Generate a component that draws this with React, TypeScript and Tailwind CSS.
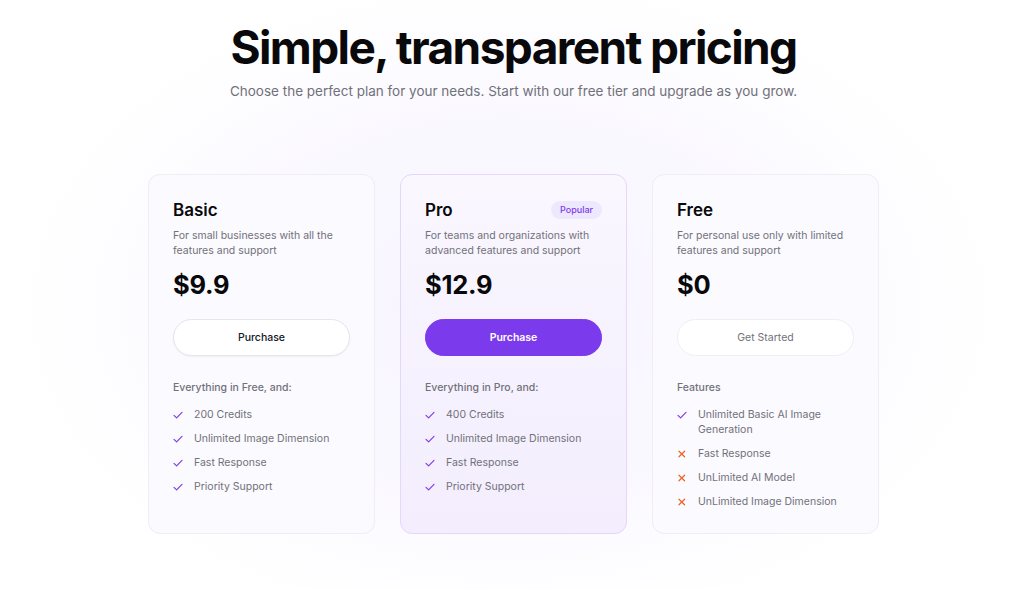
type Feature = {
  text: string;
  included: boolean;
};

type Plan = {
  name: string;
  description: string;
  price: string;
  cta: string;
  featuresTitle: string;
  features: Feature[];
  popular?: boolean;
  variant: "outline" | "primary" | "muted";
};

const plans: Plan[] = [
  {
    name: "Basic",
    description: "For small businesses with all the features and support",
    price: "$9.9",
    cta: "Purchase",
    featuresTitle: "Everything in Free, and:",
    variant: "outline",
    features: [
      { text: "200 Credits", included: true },
      { text: "Unlimited Image Dimension", included: true },
      { text: "Fast Response", included: true },
      { text: "Priority Support", included: true },
    ],
  },
  {
    name: "Pro",
    description: "For teams and organizations with advanced features and support",
    price: "$12.9",
    cta: "Purchase",
    featuresTitle: "Everything in Pro, and:",
    variant: "primary",
    popular: true,
    features: [
      { text: "400 Credits", included: true },
      { text: "Unlimited Image Dimension", included: true },
      { text: "Fast Response", included: true },
      { text: "Priority Support", included: true },
    ],
  },
  {
    name: "Free",
    description: "For personal use only with limited features and support",
    price: "$0",
    cta: "Get Started",
    featuresTitle: "Features",
    variant: "muted",
    features: [
      { text: "Unlimited Basic AI Image Generation", included: true },
      { text: "Fast Response", included: false },
      { text: "UnLimited AI Model", included: false },
      { text: "UnLimited Image Dimension", included: false },
    ],
  },
];

function CheckIcon() {
  return (
    <svg width="10" height="8" viewBox="0 0 10 8" fill="none" className="shrink-0">
      <path d="M1 4.4 L3.6 6.8 L9 1.4" stroke="#7c3aed" strokeWidth="1.15" strokeLinecap="round" strokeLinejoin="round" />
    </svg>
  );
}

function CrossIcon() {
  return (
    <svg width="10" height="8" viewBox="0 0 10 8" fill="none" className="shrink-0">
      <path d="M2 1.2 L7.6 6.8 M7.6 1.2 L2 6.8" stroke="#e8692c" strokeWidth="1.25" strokeLinecap="round" />
    </svg>
  );
}

function PlanCard({ plan }: { plan: Plan }) {
  const cardClass =
    plan.variant === "primary"
      ? "border-[#e6d6fb] bg-[linear-gradient(180deg,#faf7ff_0%,#f3edfd_100%)]"
      : "border-[#efedf5] bg-[#fbfaff]";

  const buttonClass =
    plan.variant === "primary"
      ? "bg-[#7c3aed] text-white border-[#7c3aed] font-semibold"
      : plan.variant === "outline"
      ? "bg-white text-[#111827] border-[#e6e5ec] font-medium shadow-[0_1px_2px_rgba(0,0,0,0.05)]"
      : "bg-white text-[#71717a] border-[#efeef3]";

  return (
    <div className={`rounded-[12px] border px-6 pt-[24px] pb-6 flex flex-col ${cardClass}`}>
      <div className="flex items-center justify-between">
        <h3 className="text-[17px] leading-[22px] font-semibold text-[#09090b]">{plan.name}</h3>
        {plan.popular && (
          <span className="h-[18px] px-[9px] rounded-full bg-[#ede8fd] text-[#7c3aed] text-[9px] font-medium flex items-center">
            Popular
          </span>
        )}
      </div>
      <p className="mt-[7px] text-[10.5px] leading-[15px] text-[#71717a]">{plan.description}</p>
      <div className="mt-[11px] text-[25.5px] leading-[32px] font-bold text-[#09090b] tracking-[-0.01em]">
        {plan.price}
      </div>
      <button className={`mt-[18px] h-[37px] w-full rounded-full border text-[10.5px] ${buttonClass}`}>
        {plan.cta}
      </button>
      <div className="mt-[24px] text-[10.5px] leading-[16px] font-medium text-[#71717a]">{plan.featuresTitle}</div>
      <ul className="mt-[11px] flex flex-col gap-[9px]">
        {plan.features.map((f) => (
          <li key={f.text} className="flex items-start gap-[11px] text-[10.5px] leading-[15px] text-[#71717a]">
            <span className="h-[15px] flex items-center">{f.included ? <CheckIcon /> : <CrossIcon />}</span>
            <span className="pr-2">{f.text}</span>
          </li>
        ))}
      </ul>
    </div>
  );
}

export default function App() {
  return (
    <div
      className="min-h-[589px] w-full pl-[10px] bg-white bg-[radial-gradient(ellipse_48%_55%_at_50%_52%,#f7f4fe_0%,#faf8ff_55%,#ffffff_100%)]"
      style={{ fontFamily: "Inter, 'Noto Sans', sans-serif" }}
    >
      <div className="pt-[24px] flex flex-col items-center">
        <h1 className="text-[46px] leading-none font-bold tracking-[-0.035em] text-[#09090b]">
          Simple, transparent pricing
        </h1>
        <p className="mt-[11px] text-[13.5px] leading-[20px] text-[#71717a]">
          Choose the perfect plan for your needs. Start with our free tier and upgrade as you grow.
        </p>
      </div>
      <div className="mt-[73px] mx-auto w-[731px] grid grid-cols-3 gap-[25px]">
        {plans.map((p) => (
          <PlanCard key={p.name} plan={p} />
        ))}
      </div>
    </div>
  );
}
